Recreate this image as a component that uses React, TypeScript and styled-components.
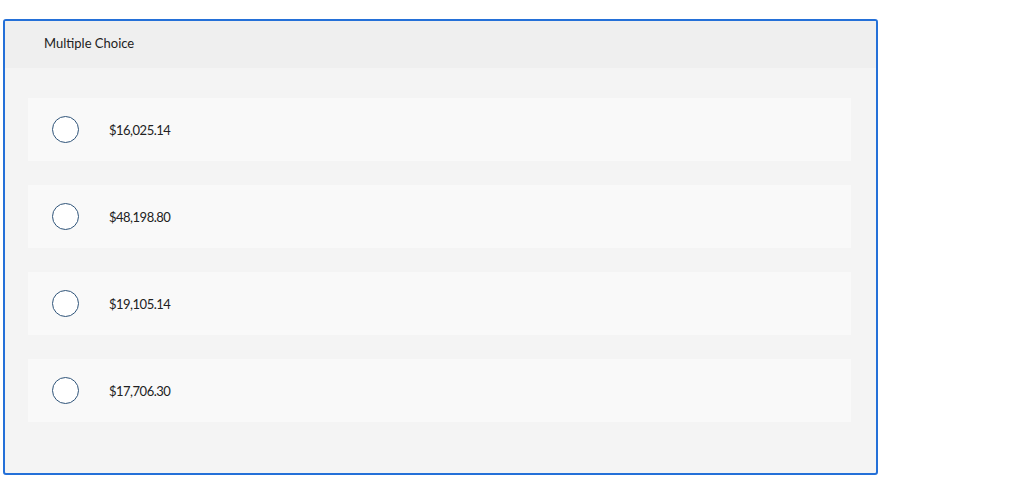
import React from 'react';
import styled, { createGlobalStyle } from 'styled-components';

const Global = createGlobalStyle`
  body {
    margin: 0;
    background: #ffffff;
    font-family: Lato, "Open Sans", sans-serif;
  }
`;

const Page = styled.div`
  padding: 19px 0 0 3px;
`;

const Card = styled.div`
  width: 875px;
  height: 456px;
  box-sizing: border-box;
  border: 2px solid #2470d8;
  border-radius: 3px;
  background: #f4f4f4;
  overflow: hidden;
  display: flex;
  flex-direction: column;
`;

const Header = styled.div`
  height: 47px;
  box-sizing: border-box;
  flex-shrink: 0;
  background: #efefef;
  display: flex;
  align-items: center;
  padding: 0 0 3px 39px;
  font-size: 13px;
  color: #222;
`;

const Options = styled.div`
  padding: 30px 25px 0 23px;
  display: flex;
  flex-direction: column;
  gap: 24px;
`;

const Option = styled.label`
  height: 63px;
  background: #f9f9f9;
  display: flex;
  align-items: center;
  padding-left: 24px;
  gap: 30px;
  font-size: 13px;
  letter-spacing: -0.5px;
  color: #222;
  cursor: pointer;
`;

const Radio = styled.span`
  width: 25px;
  height: 25px;
  border: 1px solid #2f5479;
  border-radius: 50%;
  background: #fff;
  flex-shrink: 0;
`;

const choices = ['$16,025.14', '$48,198.80', '$19,105.14', '$17,706.30'];

const App = () => {
  return (
    <>
      <Global />
      <Page>
        <Card>
          <Header>Multiple Choice</Header>
          <Options>
            {choices.map((c) => (
              <Option key={c}>
                <Radio />
                <span>{c}</span>
              </Option>
            ))}
          </Options>
        </Card>
      </Page>
    </>
  );
};

export default App;
